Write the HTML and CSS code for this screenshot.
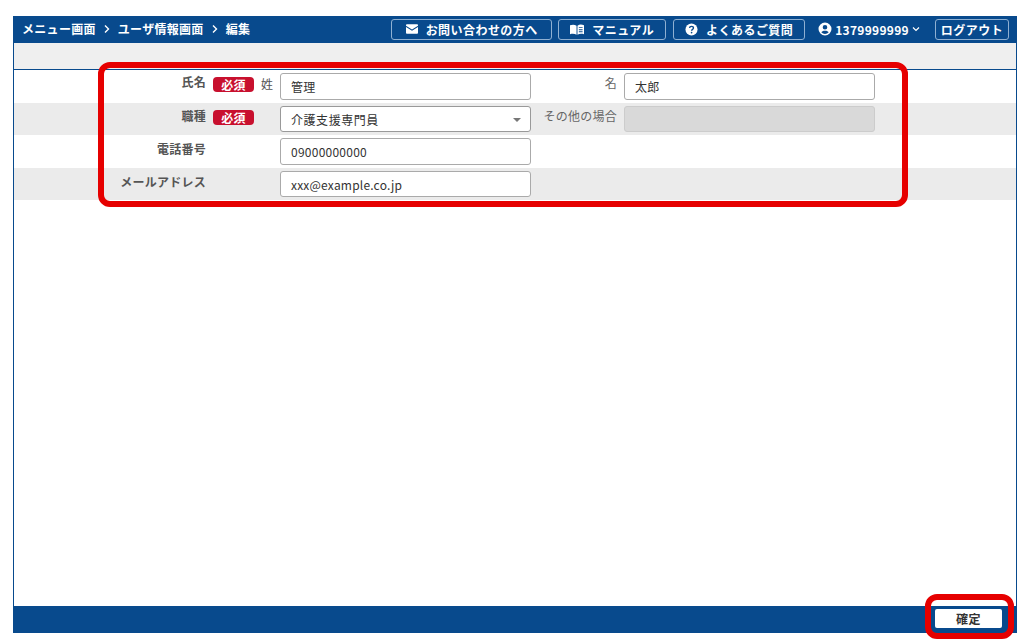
FILE: index.html
```html
<!DOCTYPE html>
<html lang="ja">
<head>
<meta charset="utf-8">
<title>編集</title>
<link rel="stylesheet" href="styles.css">
</head>
<body>
<div class="window">
  <header class="topbar">
    <nav class="crumbs">
      <span>メニュー画面</span>
      <svg class="chev" viewBox="0 0 8 10"><path d="M2 1.500 5.500 5 2 8.500" /></svg>
      <span>ユーザ情報画面</span>
      <svg class="chev" viewBox="0 0 8 10"><path d="M2 1.500 5.500 5 2 8.500" /></svg>
      <span>編集</span>
    </nav>
    <div class="actions">
      <a class="btn btn-contact">
        <svg class="ico-mail" viewBox="0 0 14 11"><path d="M1 0h12a1 1 0 0 1 1 1v.6L7 6 0 1.600V1a1 1 0 0 1 1-1z"/><path d="M0 3.200 7 7.600l7-4.400V10a1 1 0 0 1-1 1H1a1 1 0 0 1-1-1z"/></svg>
        お問い合わせの方へ
      </a>
      <a class="btn btn-manual">
        <svg class="ico-book" viewBox="0 0 15 11"><path d="M0 1c2.500-.8 5-.8 7 .4V11C5 9.900 2.500 9.900 0 10.500z"/><path d="M8 1.400C10-.1 12.500-.1 15 1v9.500c-2.500-.6-5-.6-7 .5zM9.500 3v1H13.500V3zM9.500 5.200v1H13.500v-1zM9.500 7.400v1H13.500v-1z" fill-rule="evenodd"/></svg>
        マニュアル
      </a>
      <a class="btn btn-faq">
        <svg class="ico-help" viewBox="0 0 14 14"><circle cx="7" cy="7" r="6.500"/><path class="q" d="M4.900 5.400C5 4.200 5.900 3.600 7 3.600c1.200 0 2.100.7 2.100 1.800 0 1.500-2 1.500-2 3"/><circle class="dot" cx="7.100" cy="10.300" r=".9"/></svg>
        よくあるご質問
      </a>
      <div class="user">
        <svg class="ico-user" viewBox="0 0 14 14"><path fill-rule="evenodd" d="M7 .5a6.500 6.500 0 1 0 0 13 6.500 6.500 0 0 0 0-13zM7 3a2.300 2.300 0 1 1 0 4.600A2.300 2.300 0 0 1 7 3zM3.300 10.300C3.900 9.200 5 8.700 7 8.700s3.100.5 3.700 1.600A4.900 4.900 0 0 1 7 12a4.900 4.900 0 0 1-3.700-1.700z"/></svg>
        <span>1379999999</span>
        <svg class="caret" viewBox="0 0 8 6"><path d="M1 1.500 4 4.500 7 1.500"/></svg>
      </div>
      <a class="btn btn-logout">ログアウト</a>
    </div>
  </header>
  <div class="subbar"></div>
  <main class="content">
    <form class="form">
      <div class="row">
        <div class="label">氏名</div>
        <div class="marks"><span class="req">必須</span><span class="part">姓</span></div>
        <div class="field">管理</div>
        <div class="label2">名</div>
        <div class="field">太郎</div>
      </div>
      <div class="row row-alt">
        <div class="label">職種</div>
        <div class="marks"><span class="req">必須</span></div>
        <div class="field select">介護支援専門員<i class="arrow"></i></div>
        <div class="label2">その他の場合</div>
        <div class="field disabled"></div>
      </div>
      <div class="row">
        <div class="label">電話番号</div>
        <div class="marks"></div>
        <div class="field">09000000000</div>
      </div>
      <div class="row row-alt">
        <div class="label">メールアドレス</div>
        <div class="marks"></div>
        <div class="field field-short">xxx@example.co.jp</div>
      </div>
    </form>
  </main>
  <footer class="footer">
    <button class="confirm" type="button">確定</button>
  </footer>
</div>
<div class="callout callout-form"></div>
<div class="callout callout-confirm"></div>
</body>
</html>
```
FILE: styles.css
```css
* { box-sizing: border-box; }
html, body { margin: 0; height: 100%; background: #fff; }
body {
  padding: 16px 12px 10px 13px;
  font-family: "Noto Sans CJK JP", "Noto Sans", sans-serif;
  font-size: 12px;
  letter-spacing: .25px;
  overflow: hidden;
}
.window {
  height: 617px;
  border: 1px solid #084a8d;
  display: flex;
  flex-direction: column;
  background: #fff;
}
.topbar {
  height: 26px;
  flex: none;
  background: #084a8d;
  color: #fff;
  font-weight: 700;
  display: flex;
  align-items: center;
  justify-content: space-between;
  padding: 0 7px 2px 8px;
}
.crumbs { display: flex; align-items: center; gap: 7px; line-height: 24px; letter-spacing: .3px; }
.chev { width: 8px; height: 10px; fill: none; stroke: #fff; stroke-width: 1.4; }
.actions { display: flex; align-items: center; letter-spacing: .45px; }
.btn {
  height: 21px;
  border: 1px solid #8fb0d2;
  border-radius: 3px;
  display: flex;
  align-items: center;
  justify-content: center;
  gap: 8px;
  color: #fff;
}
.btn-contact { width: 161px; margin-right: 6px; }
.btn-manual { width: 108px; margin-right: 7px; }
.btn-faq { width: 132px; margin-right: 13px; }
.btn-logout { width: 74px; margin-left: 15px; }
.ico-mail { width: 12px; height: 10px; fill: #fff; }
.ico-book { width: 14px; height: 11px; fill: #fff; }
.ico-help { width: 13px; height: 13px; fill: #fff; }
.ico-help .q { fill: none; stroke: #084a8d; stroke-width: 1.5; }
.ico-help .dot { fill: #084a8d; }
.ico-user { width: 14px; height: 14px; fill: #fff; margin-right: 3px; }
.user { display: flex; align-items: center; letter-spacing: .3px; }
.caret { width: 8px; height: 6px; margin-left: 3px; fill: none; stroke: #fff; stroke-width: 1.2; }
.subbar {
  height: 26px;
  flex: none;
  background: #efefef;
  border-bottom: 1px solid #084a8d;
  box-sizing: content-box;
}
.content { flex: 1; min-height: 0; }
.row {
  height: 33px;
  display: flex;
  align-items: flex-start;
  padding-top: 3px;
}
.row:nth-child(2) { height: 32px; }
.row:nth-child(4) { height: 32px; }
.row-alt { background: #ebebeb; }
.label {
  width: 192px;
  text-align: right;
  font-weight: 700;
  color: #555;
  line-height: 20px;
  margin-top: -1px;
}
.row:nth-child(2) .label { margin-top: 0; }
.row:nth-child(3) .label { margin-top: 1px; }
.row:nth-child(4) .label { margin-top: 1px; }
.marks {
  width: 74px;
  display: flex;
  align-items: center;
  padding-left: 7px;
  height: 20px;
  margin-top: 1px;
}
.req {
  width: 41px;
  height: 15px;
  background: #c8102e;
  border-radius: 4px;
  color: #fff;
  font-weight: 700;
  text-align: center;
  line-height: 15px;
}
.part { margin: 0 0 2px 7px; color: #555; }
.label2 {
  width: 93px;
  padding-right: 7px;
  text-align: right;
  color: #666;
  line-height: 20px;
}
.field {
  width: 251px;
  height: 27px;
  border: 1px solid #aaa;
  border-radius: 3px;
  background: #fff;
  color: #333;
  padding-left: 10px;
  line-height: 25px;
  position: relative;
}
.field-short { height: 26px; letter-spacing: .2px; }
.select { border-color: #999; height: 26px; letter-spacing: .55px; }
.arrow {
  position: absolute;
  right: 9px;
  top: 11px;
  border: 4px solid transparent;
  border-top-color: #777;
  border-bottom: 0;
}
.disabled { background: #d9d9d9; border-color: #ccc; height: 26px; }
.footer {
  height: 26px;
  flex: none;
  background: #084a8d;
  display: flex;
  justify-content: flex-end;
  align-items: center;
  padding: 0 14px 1px 0;
}
.confirm {
  width: 67px;
  height: 19px;
  padding: 0;
  border: 0;
  border-radius: 2px;
  background: #fff;
  color: #333;
  font: 700 12px "Noto Sans CJK JP", sans-serif;
  letter-spacing: .5px;
}
.callout {
  position: absolute;
  border: 6px solid #e60000;
  border-radius: 12px;
  pointer-events: none;
}
.callout-form { left: 98px; top: 62px; width: 810px; height: 145px; }
.callout-confirm { left: 925px; top: 594px; width: 89px; height: 45px; }
```
